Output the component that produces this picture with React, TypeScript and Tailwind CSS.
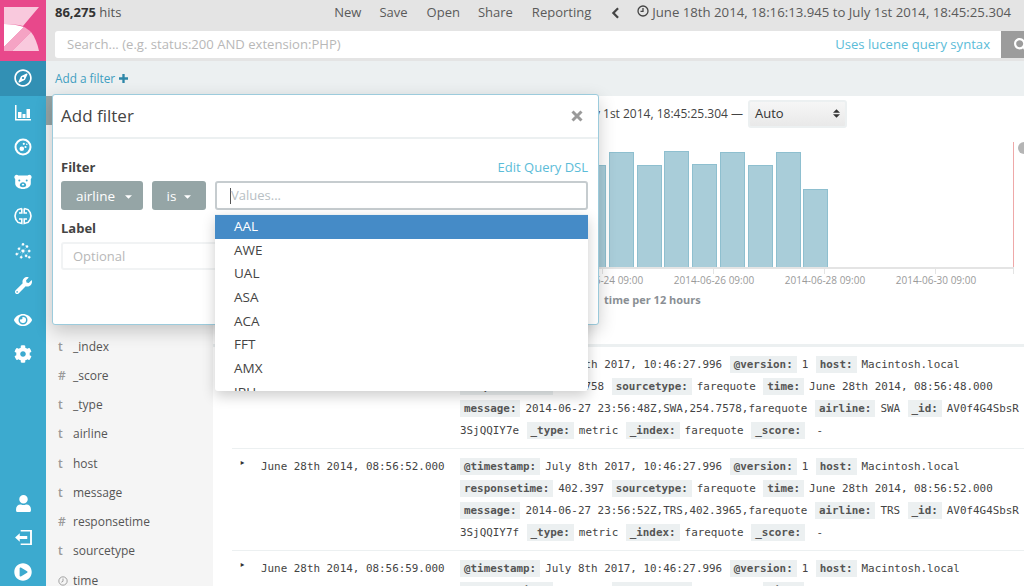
import React from 'react';
import { FaCog, FaEye, FaPlayCircle, FaRegCompass, FaSearch, FaUser, FaWrench } from 'react-icons/fa';

const SANS = { fontFamily: '"Open Sans", sans-serif' };

const FIELDS = [
  ['t', '_index'],
  ['#', '_score'],
  ['t', '_type'],
  ['t', 'airline'],
  ['t', 'host'],
  ['t', 'message'],
  ['#', 'responsetime'],
  ['t', 'sourcetype'],
  ['c', 'time'],
];

const BARS = [165, 152, 165, 151, 164, 152, 165, 152, 189];
const OPTIONS = ['AAL', 'AWE', 'UAL', 'ASA', 'ACA', 'FFT', 'AMX', 'JBU'];

type Pair = [string, string];

const docLines = (time: string, rt: string, sec: string, code: string, price: string, id: string): Pair[][] => [
  [['@timestamp:', 'July 8th 2017, 10:46:27.996'], ['@version:', '1'], ['host:', 'Macintosh.local']],
  [['responsetime:', rt], ['sourcetype:', 'farequote'], ['time:', time]],
  [['message:', `2014-06-27 23:56:${sec}Z,${code},${price},farequote`], ['airline:', code], ['_id:', 'AV0f4G4SbsR']],
  [['', id], ['_type:', 'metric'], ['_index:', 'farequote'], ['_score:', ' -']],
];

const DOCS = [
  { time: 'June 28th 2014, 08:56:48.000', lines: docLines('June 28th 2014, 08:56:48.000', '254.758', '48', 'SWA', '254.7578', '3SjQQIY7e') },
  { time: 'June 28th 2014, 08:56:52.000', lines: docLines('June 28th 2014, 08:56:52.000', '402.397', '52', 'TRS', '402.3965', '3SjQQIY7f') },
  { time: 'June 28th 2014, 08:56:59.000', lines: docLines('June 28th 2014, 08:56:59.000', '212.204', '59', 'DAL', '212.2041', '3SjQQIY7g') },
];

const Logo = () => (
  <svg viewBox="0 0 46 61" className="w-[46px] h-[61px]">
    <path d="M4 7H39L23 26C17 24.500 10 24 4 24Z" fill="#f9c9dd" />
    <path d="M4 24C11 24 18 25 24 27L4 47Z" fill="#fff" />
    <path d="M24 27C26 28 28 29.500 31 32L12 51H4V47Z" fill="#f5a3c4" />
    <path d="M31 32C35 37 37.500 44 39 51H12Z" fill="#f9c9dd" />
  </svg>
);

const VisualizeIcon = () => (
  <svg viewBox="0 0 18 18" className="w-[18px] h-[18px]" fill="#fff">
    <path d="M1 1h1.500v14H17v1.500H1Z" />
    <rect x="4" y="8" width="3.500" height="6" />
    <rect x="8.500" y="10" width="3" height="4" />
    <rect x="12.500" y="5" width="3.500" height="9" />
  </svg>
);

const DashboardIcon = () => (
  <svg viewBox="0 0 18 18" className="w-[18px] h-[18px]" fill="#fff">
    <path fillRule="evenodd" d="M9 .5a8.500 8.500 0 1 0 0 17 8.500 8.500 0 0 0 0-17Zm0 2a6.500 6.500 0 1 1 0 13 6.500 6.500 0 0 1 0-13Z" />
    <circle cx="7.800" cy="10.800" r="2.300" />
    <circle cx="11.500" cy="9" r="1.100" />
    <circle cx="9.800" cy="5.800" r="1.100" />
    <circle cx="12.800" cy="6.200" r=".8" />
  </svg>
);

const BearIcon = () => (
  <svg viewBox="0 0 18 16" className="w-[18px] h-[16px]" fill="#fff">
    <path fillRule="evenodd" d="M1 1.500c1-1 2.500-.8 3.300 0h9.400c.8-.8 2.300-1 3.300 0 1 1.200.8 2.600-.2 3.500v4.500c0 3.300-4 5.500-7.800 5.500S1.200 12.800 1.200 9.500V5C.2 4.100 0 2.700 1 1.500ZM9 8.200c-1.800 0-3.200 1.400-3.200 3 0 1.100 1.400 2 3.200 2s3.200-.9 3.200-2c0-1.600-1.400-3-3.200-3ZM5.300 5.500a1 1 0 1 0 0 2 1 1 0 0 0 0-2Zm7.400 0a1 1 0 1 0 0 2 1 1 0 0 0 0-2Z" />
    <ellipse cx="9" cy="10.600" rx="1.200" ry=".9" />
  </svg>
);

const BrainIcon = () => (
  <svg viewBox="0 0 18 18" className="w-[18px] h-[18px]" fill="none" stroke="#fff" strokeWidth="1.600">
    <path d="M7.800 1.500 4 2.600 1.800 5.500 1 9l.8 3.500L4 15.400l3.800 1.100V12H5" />
    <path d="M10.200 1.500 14 2.600l2.200 2.900L17 9l-.8 3.500-2.200 2.900-3.800 1.100V12H13" />
    <path d="M7.800 1.500V6H5M10.200 1.500V6H13" />
  </svg>
);

const GraphIcon = () => (
  <svg viewBox="0 0 18 18" className="w-[16px] h-[16px]" fill="#fff" stroke="#fff" strokeWidth=".6">
    <path d="M9 1 4.500 6.500 9 9l-7 3.500M9 1l4.500 3L9 9l7 0-3.500 5.500L9 9l-2 7" fill="none" strokeDasharray="1 1.500" />
    <circle cx="9" cy="1.500" r="1.200" />
    <circle cx="4.500" cy="6.500" r="1.200" />
    <circle cx="13.500" cy="4" r="1.200" />
    <circle cx="9" cy="9" r="1.500" />
    <circle cx="16" cy="9" r="1.200" />
    <circle cx="2" cy="12.500" r="1.200" />
    <circle cx="12.500" cy="14.500" r="1.200" />
    <circle cx="7" cy="16" r="1.200" />
    <circle cx="16" cy="16" r="1.200" />
  </svg>
);

const LogoutIcon = () => (
  <svg viewBox="0 0 18 16" className="w-[17px] h-[15px]" fill="#fff">
    <path d="M6 0h12v16H6v-1.700h10V1.700H6Z" />
    <path d="M5 3.500v3h8v3H5v3L0 8Z" />
  </svg>
);

const NAV: [React.ReactNode, number][] = [
  [<VisualizeIcon key="v" />, 32],
  [<DashboardIcon key="d" />, 36],
  [<BearIcon key="b" />, 34],
  [<BrainIcon key="br" />, 34],
  [<GraphIcon key="g" />, 35],
  [<FaWrench key="w" className="text-white text-[17px]" />, 35],
  [<FaEye key="e" className="text-white text-[18px]" />, 33],
  [<FaCog key="c" className="text-white text-[18px]" />, 35],
];

const Sidebar = () => (
  <aside className="w-[46px] shrink-0 h-full bg-[#3caacf] flex flex-col items-stretch">
    <div className="h-[61px] bg-[#e8488b]">
      <Logo />
    </div>
    <div className="h-[35px] bg-[#3290b4] flex items-center justify-center pb-[1px]">
      <FaRegCompass className="text-white text-[18px]" />
    </div>
    <div className="pt-[1px] flex flex-col">
      {NAV.map(([icon, h], i) => (
        <div key={i} style={{ height: h }} className="flex items-center justify-center">
          {icon}
        </div>
      ))}
    </div>
    <div className="mt-auto flex flex-col items-center">
      <div className="h-[34px] flex items-center"><FaUser className="text-white text-[17px]" /></div>
      <div className="h-[34px] flex items-center"><LogoutIcon /></div>
      <div className="h-[32px] pt-[4px] flex items-center"><FaPlayCircle className="text-white text-[18px]" /></div>
    </div>
  </aside>
);

const TopBar = () => (
  <div className="h-[61px] bg-[#e4e4e4] shrink-0">
    <div className="h-[31px] pl-[9px] pr-[13px] pt-px flex items-start justify-between text-[13px] leading-[23px] text-[#555]">
      <div><b className="font-bold text-[#333]">86,275</b> hits</div>
      <div className="flex items-center text-[#5a5a5a]">
        <span className="mr-[18px]">New</span>
        <span className="mr-[19px]">Save</span>
        <span className="mr-[18px]">Open</span>
        <span className="mr-[19px]">Share</span>
        <span className="mr-[20px]">Reporting</span>
        <svg viewBox="0 0 10 14" className="w-[9px] h-[12px] mr-[17px]" fill="none" stroke="#444" strokeWidth="2.600">
          <path d="M8 1.500 2.500 7 8 12.500" />
        </svg>
        <svg viewBox="0 0 12 12" className="w-[12px] h-[12px] mr-[3px] -mt-[4px]" fill="none" stroke="#444" strokeWidth="1.300">
          <circle cx="6" cy="6" r="5" />
          <path d="M6 3v3.300H3.500" />
        </svg>
        <span className="text-[13.200px]">June 18th 2014, 18:16:13.945 to July 1st 2014, 18:45:25.304</span>
      </div>
    </div>
    <div className="flex ml-[9px] h-[27px]">
      <div className="flex-1 bg-white rounded-l-[3px] flex items-center justify-between pl-[12px] pr-[11px] text-[13.100px]">
        <span className="text-[#b8b8b8]">Search... (e.g. status:200 AND extension:PHP)</span>
        <span className="text-[#5bbcd8]">Uses lucene query syntax</span>
      </div>
      <div className="w-[23px] bg-[#9c9c9c] flex items-center pl-[13px] overflow-hidden">
        <FaSearch className="text-white text-[14px] shrink-0" />
      </div>
    </div>
  </div>
);

const FieldList = () => (
  <div className="w-[167px] shrink-0 bg-[#f5f5f5] h-full overflow-hidden">
    <div className="h-[29px] bg-[#95a5a6]" />
    <div className="pt-[207px] pl-[12px] flex flex-col">
      {FIELDS.map(([type, name]) => (
        <div key={name} className="h-[29.250px] shrink-0 flex items-center text-[12px] text-[#555]">
          <span className="w-[15px] text-[#999] font-semibold">
            {type === 'c' ? (
              <svg viewBox="0 0 12 12" className="w-[10px] h-[10px]" fill="none" stroke="#999" strokeWidth="1.100">
                <circle cx="6" cy="6" r="5" />
                <path d="M6 3v3.300L4 7.500" />
              </svg>
            ) : type}
          </span>
          <span>{name}</span>
        </div>
      ))}
    </div>
  </div>
);

const Chart = () => (
  <div className="relative h-[248px] shrink-0 flex flex-col">
    <div className="h-[33px] pt-[2px] flex items-center justify-end pr-[177px] text-[12px] text-[#444]">
      <span>June 18th 2014, 18:16:13.945 - July 1st 2014, 18:45:25.304 —</span>
      <div className="ml-[5px] w-[99px] h-[28px] rounded-[3px] border-2 border-[#ecf0f1] bg-linear-to-b from-[#f6f6f6] to-[#e9e9e9] flex items-center justify-between pl-[5px] pr-[5px] text-[13px] text-[#333]">
        <span>Auto</span>
        <span className="flex flex-col items-center gap-px">
          <svg viewBox="0 0 8 4" className="w-[7px] h-[4px]" fill="#333"><path d="M4 0 8 4H0Z" /></svg>
          <svg viewBox="0 0 8 4" className="w-[7px] h-[4px]" fill="#333"><path d="M0 0H8L4 4Z" /></svg>
        </span>
      </div>
    </div>
    <div className="relative h-[140px] ml-[368px] mr-[10px] border-b-2 border-[#e4e4e4]">
      <div className="absolute z-10 top-[13px] bottom-0 right-0 w-[1.500px] bg-[#efa8a8]" />
      <div className="flex items-end h-full gap-[2.800px]">
        {BARS.map((top, i) => (
          <div
            key={i}
            style={{ height: 267 - top }}
            className="w-[25px] bg-[#a9cdd9] border border-b-0 border-[#8ebfcf]"
          />
        ))}
      </div>
    </div>
    <div className="relative h-[22px] text-[10px] text-[#9a9a9a]">
      {[389, 500, 611, 722, 800].map((x) => (
        <span key={x} style={{ left: x }} className="absolute top-0 w-px h-[5px] bg-[#e4e4e4]" />
      ))}
      <span className="absolute left-[335px] top-[4px] w-[110px] text-center">2014-06-24 09:00</span>
      <span className="absolute left-[446px] top-[4px] w-[110px] text-center">2014-06-26 09:00</span>
      <span className="absolute left-[557px] top-[4px] w-[110px] text-center">2014-06-28 09:00</span>
      <span className="absolute left-[668px] top-[4px] w-[110px] text-center">2014-06-30 09:00</span>
    </div>
    <div className="pl-[391px] pt-px text-[11px] leading-[16px] font-bold text-[#8a8f94]">time per 12 hours</div>
    <span className="absolute left-[805px] top-[46px] w-[12px] h-[12px] rounded-full bg-[#b5b5b5]" />
  </div>
);

const Doc = ({ time, lines }: { time: string; lines: Pair[][] }) => (
  <div className="flex border-b border-[#ecf0f1] ml-[19px] h-[102px] pt-[7px] leading-[22px] text-[10.900px] text-[#444] font-['DejaVu_Sans_Mono',monospace] whitespace-pre">
    <span className="w-[9px] shrink-0 mt-[-3px] ml-[7px] mr-[13px] text-[#333]">‣</span>
    <span className="w-[199px] shrink-0">{time}</span>
    <div className="shrink-0">
      {lines.map((line, i) => (
        <div key={i} className="h-[22px]">
          {line.map(([label, value], j) => (
            <React.Fragment key={j}>
              {label && <span className="bg-[#ecf0f1] px-[4px] py-[2px] mr-[5px] font-bold text-[#555]">{label}</span>}
              <span className="mr-[7.500px]">{value}</span>
            </React.Fragment>
          ))}
        </div>
      ))}
    </div>
  </div>
);

const FilterModal = () => (
  <div className="absolute left-[6px] top-[-2px] w-[547px] h-[231px] bg-white border border-[#9ccbdc] rounded-[3px] shadow-[0_6px_18px_rgba(0,0,0,0.2)]">
    <div className="h-[44px] border-b-2 border-[#ecf0f1] flex items-center justify-between pl-[8px] pr-[15px]">
      <span className="text-[17px] text-[#444]">Add filter</span>
      <svg viewBox="0 0 12 12" className="w-[12px] h-[12px]" stroke="#9a9a9a" strokeWidth="3">
        <path d="M1.500 1.500 10.500 10.500M10.500 1.500 1.500 10.500" />
      </svg>
    </div>
    <div className="pl-[8px] pr-[10px] pt-[19px]">
      <div className="flex justify-between items-center h-[20px] text-[13px]">
        <b className="font-bold text-[#444]">Filter</b>
        <span className="text-[#5bbcd8]">Edit Query DSL</span>
      </div>
      <div className="flex mt-[3px] h-[29px] text-[13.500px] text-white">
        <div className="w-[82px] pl-[4px] pt-[2px] bg-[#95a5a6] rounded-[3px] flex items-center justify-center gap-[10px]">
          airline
          <svg viewBox="0 0 8 4" className="w-[7px] h-[4px]" fill="#fff"><path d="M0 0H8L4 4Z" /></svg>
        </div>
        <div className="w-[54px] ml-[9px] pt-[2px] bg-[#95a5a6] rounded-[3px] flex items-center justify-center gap-[8px]">
          is
          <svg viewBox="0 0 8 4" className="w-[7px] h-[4px]" fill="#fff"><path d="M0 0H8L4 4Z" /></svg>
        </div>
        <div className="flex-1 ml-[9px] pt-px border-2 border-[#c6cccf] rounded-[3px] flex items-center pl-[13px] text-[13px] text-[#b8c0c4]">
          <span className="w-px h-[16px] bg-[#555]" />
          Values...
        </div>
      </div>
      <div className="mt-[8px] text-[13px] leading-[20px] font-bold text-[#444]">Label</div>
      <div className="mt-[4px] w-[300px] h-[28px] pt-px border-2 border-[#f1f3f4] rounded-[3px] flex items-center pl-[10px] text-[13px] text-[#b8b8b8]">Optional</div>
    </div>
  </div>
);

const ValuesMenu = () => (
  <div className="absolute left-[169px] top-[118px] w-[373px] h-[177px] overflow-hidden bg-white border-t border-[#ecf0f1] rounded-b-[3px] shadow-[0_5px_14px_rgba(0,0,0,0.2)] text-[13.500px] text-[#444]">
    {OPTIONS.map((o, i) => (
      <div key={o} className={`h-[23.700px] leading-[23.700px] pl-[19px] ${i === 0 ? 'bg-[#458bc7] text-white' : ''}`}>{o}</div>
    ))}
  </div>
);

export default function App() {
  return (
    <div className="w-[1024px] h-[586px] flex overflow-hidden bg-white" style={SANS}>
      <Sidebar />
      <div className="flex-1 min-w-0 flex flex-col">
        <TopBar />
        <div className="h-[35px] shrink-0 bg-[#ecf0f1] flex items-center pl-[9px] text-[11.800px] text-[#3f9ec0]">
          Add a filter
          <svg viewBox="0 0 10 10" className="w-[9px] h-[9px] ml-[4px]" stroke="#2e87a8" strokeWidth="2.600">
            <path d="M5 0v10M0 5h10" />
          </svg>
        </div>
        <div className="relative flex-1 min-h-0 flex">
          <FieldList />
          <div className="flex-1 min-w-0 overflow-hidden">
            <Chart />
            <div className="h-[3px] bg-[#ecf0f1]" />
            {DOCS.map((d) => <Doc key={d.time} time={d.time} lines={d.lines} />)}
          </div>
          <FilterModal />
          <ValuesMenu />
        </div>
      </div>
    </div>
  );
}
